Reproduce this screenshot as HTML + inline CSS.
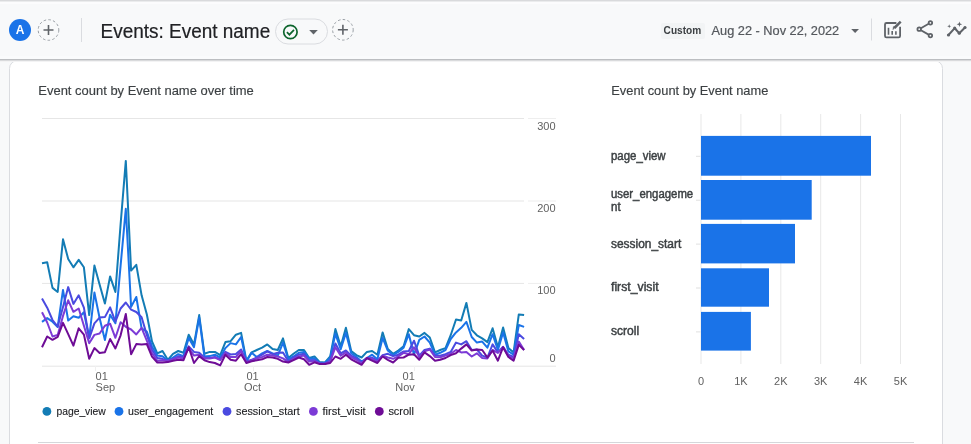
<!DOCTYPE html>
<html lang="en"><head><meta charset="utf-8"><title>Events: Event name</title>
<style>
html,body{margin:0;padding:0;background:#f8f9fa;}
body{width:971px;height:444px;overflow:hidden;position:relative;font-family:'Liberation Sans',sans-serif;}
svg{position:absolute;left:0;top:0;display:block;will-change:transform;}
text{font-family:'Liberation Sans',sans-serif;}
</style></head><body>
<svg width="971" height="444" viewBox="0 0 971 444">

<rect x="0" y="0" width="971" height="444" fill="#f8f9fa"/>
<rect x="0" y="0" width="971" height="1" fill="#d9dadc"/><rect x="0" y="1" width="971" height="1" fill="#ebeced"/><rect x="0" y="2" width="971" height="2" fill="#fcfcfd"/>
<rect x="9.5" y="60.5" width="933" height="400" rx="8" ry="8" fill="#ffffff" stroke="#dadce0" stroke-width="1"/>
<rect x="0" y="56" width="971" height="3" fill="#fafbfc"/>
<rect x="0" y="61" width="971" height="1" fill="#f3f3f4"/>
<rect x="0" y="60" width="971" height="1" fill="#d9dadc"/>
<rect x="0" y="59" width="971" height="1" fill="#bcbec1"/>
<circle cx="20" cy="30" r="11" fill="#1a73e8"/>
<text x="20" y="34.3" font-size="12" font-weight="700" fill="#ffffff" text-anchor="middle">A</text>
<circle cx="48.5" cy="30" r="10.3" fill="none" stroke="#9aa0a6" stroke-width="1" stroke-dasharray="2.6 2.2"/>
<path d="M43.5 30h10M48.5 25v10" stroke="#5f6368" stroke-width="1.6" fill="none"/>
<rect x="81" y="18" width="1" height="24" fill="#dadce0"/>
<text x="100.5" y="38" font-size="20" fill="#202124" stroke="#202124" stroke-width="0.2" textLength="169.7" lengthAdjust="spacingAndGlyphs">Events: Event name</text>
<rect x="275.5" y="19" width="52" height="25" rx="12.5" fill="#f8f9fa" stroke="#dadce0" stroke-width="1"/>
<circle cx="290.4" cy="32" r="6.7" fill="none" stroke="#0d652d" stroke-width="1.7"/>
<path d="M286.9 32.2l2.5 2.5l4.6 -4.9" fill="none" stroke="#0d652d" stroke-width="1.7"/>
<path d="M309.2 30l4.3 4.4l4.3 -4.4z" fill="#5f6368"/>
<circle cx="342.9" cy="29.8" r="10.3" fill="none" stroke="#9aa0a6" stroke-width="1" stroke-dasharray="2.6 2.2"/>
<path d="M337.9 29.8h10M342.9 24.8v10" stroke="#5f6368" stroke-width="1.6" fill="none"/>
<rect x="661" y="23" width="44" height="16" rx="2" fill="#f2f4f5"/>
<text x="663.6" y="34.1" font-size="10" font-weight="700" fill="#3c4043" textLength="37.6" lengthAdjust="spacingAndGlyphs">Custom</text>
<text x="711.6" y="34.7" font-size="12.3" fill="#54585d" stroke="#54585d" stroke-width="0.2" textLength="127.6" lengthAdjust="spacingAndGlyphs">Aug 22 - Nov 22, 2022</text>
<path d="M851.2 29l3.9 4l3.9 -4z" fill="#5f6368"/>
<rect x="871" y="18.5" width="1" height="22" fill="#dadce0"/>
<g fill="none" stroke="#5f6368" stroke-width="1.8"><path d="M896.4 23h-9.9a1.5 1.5 0 0 0 -1.5 1.5v11.4a1.5 1.5 0 0 0 1.5 1.5h12.1a1.5 1.5 0 0 0 1.5 -1.5v-9.2"/><path d="M888.5 34.8V27.8M892.2 34.8V31M895.9 34.8V31.2" stroke-width="1.6"/><path d="M900.7 21.7l-6.3 6.3" stroke-width="2.5"/><path d="M895.4 27l-2.4 2.6l0.4 -2.9z" fill="#5f6368" stroke-width="0.6"/></g>
<g fill="none" stroke="#5f6368" stroke-width="1.8"><path d="M930.4 22.8l-11.2 6.4l11.2 6.4"/><circle cx="930.4" cy="22.8" r="1.75" fill="#f8f9fa"/><circle cx="919.2" cy="29.2" r="1.75" fill="#f8f9fa"/><circle cx="930.4" cy="35.6" r="1.75" fill="#f8f9fa"/></g>
<path d="M948.5 35l6.2 -6.8l4.6 5l5.7 -5.7" fill="none" stroke="#5f6368" stroke-width="2" stroke-linejoin="round" stroke-linecap="round"/><circle cx="948.5" cy="35" r="1.6" fill="#5f6368"/><circle cx="954.7" cy="28.2" r="1.6" fill="#5f6368"/><circle cx="959.3" cy="33.2" r="1.6" fill="#5f6368"/><circle cx="965" cy="27.5" r="1.6" fill="#5f6368"/><path d="M959.4 21.5l.7 2.1l2.1 .7l-2.1 .7l-.7 2.1l-.7 -2.1l-2.1 -.7l2.1 -.7z" fill="#5f6368"/><path d="M949.2 24.3l.5 1.5l1.5 .5l-1.5 .5l-.5 1.5l-.5 -1.5l-1.5 -.5l1.5 -.5z" fill="#5f6368"/>
<text x="38.3" y="95.3" font-size="13" fill="#3c4043" stroke="#3c4043" stroke-width="0.15" textLength="215.5" lengthAdjust="spacingAndGlyphs">Event count by Event name over time</text>
<text x="611.3" y="95.3" font-size="13" fill="#3c4043" stroke="#3c4043" stroke-width="0.15" textLength="157" lengthAdjust="spacingAndGlyphs">Event count by Event name</text>
<rect x="42" y="118.0" width="482" height="1" fill="#e6e6e6"/>
<rect x="528" y="118.0" width="28" height="1" fill="#eeeeee"/>
<rect x="42" y="200.5" width="482" height="1" fill="#e6e6e6"/>
<rect x="528" y="200.5" width="28" height="1" fill="#eeeeee"/>
<rect x="42" y="282.9" width="482" height="1" fill="#e6e6e6"/>
<rect x="528" y="282.9" width="28" height="1" fill="#eeeeee"/>
<rect x="42" y="365.7" width="514" height="1" fill="#e5e5e5"/>
<rect x="95.0" y="366" width="1" height="5" fill="#f0f0f0"/>
<rect x="253.0" y="366" width="1" height="5" fill="#f0f0f0"/>
<rect x="414.0" y="366" width="1" height="5" fill="#f0f0f0"/>
<text x="555.6" y="129.9" font-size="11" fill="#616161" text-anchor="end">300</text>
<text x="555.6" y="212.0" font-size="11" fill="#616161" text-anchor="end">200</text>
<text x="555.6" y="293.8" font-size="11" fill="#616161" text-anchor="end">100</text>
<text x="555.6" y="361.6" font-size="11" fill="#616161" text-anchor="end">0</text>
<text x="95.6" y="379.8" font-size="11" fill="#616161">01</text><text x="95.6" y="390.7" font-size="11" fill="#616161">Sep</text>
<text x="252.6" y="379.8" font-size="11" fill="#616161" text-anchor="middle">01</text><text x="252.6" y="390.7" font-size="11" fill="#616161" text-anchor="middle">Oct</text>
<text x="414.8" y="379.8" font-size="11" fill="#616161" text-anchor="end">01</text><text x="414.8" y="390.7" font-size="11" fill="#616161" text-anchor="end">Nov</text>
<polyline fill="none" stroke="#137cb5" stroke-width="2" stroke-linejoin="round" points="42.0,263.2 47.2,262.3 52.5,287.9 57.7,292.0 63.0,239.3 68.2,259.0 73.4,267.3 78.7,259.9 83.9,267.3 89.2,315.1 94.4,265.6 99.6,284.6 104.9,303.6 110.1,276.4 115.4,292.0 120.6,224.4 125.8,160.9 131.1,270.6 136.3,264.8 141.6,295.3 146.8,314.3 152.0,341.5 157.3,353.3 162.5,351.0 167.8,359.8 173.0,353.8 178.2,351.0 183.5,352.8 188.7,334.7 194.0,344.4 199.2,315.1 204.4,353.8 209.7,351.9 214.9,351.9 220.2,355.1 225.4,342.1 230.6,341.2 235.9,334.7 241.1,332.9 246.4,360.7 251.6,352.4 256.8,350.0 262.1,347.7 267.3,344.4 272.6,349.1 277.8,350.0 283.0,338.4 288.3,358.0 293.5,353.8 298.8,350.0 304.0,350.0 309.2,358.0 314.5,356.5 319.7,362.1 325.0,362.5 330.2,356.5 335.4,329.1 340.7,346.4 345.9,327.8 351.2,351.0 356.4,355.1 361.6,357.5 366.9,351.9 372.1,351.0 377.4,354.7 382.6,332.4 387.8,349.1 393.1,353.8 398.3,350.5 403.6,346.4 408.8,329.1 414.0,335.2 419.3,336.5 424.5,332.9 429.8,337.5 435.0,352.4 440.2,350.0 445.5,348.1 450.7,335.2 456.0,319.5 461.2,320.5 466.4,302.9 471.7,329.9 476.9,335.3 482.2,338.4 487.4,342.1 492.6,328.3 497.9,347.2 503.1,327.5 508.4,348.1 513.6,352.4 518.8,314.4 524.1,315.1"/>
<polyline fill="none" stroke="#1a73e8" stroke-width="2" stroke-linejoin="round" points="42.0,321.9 47.2,318.1 52.5,321.7 57.7,327.0 63.0,289.9 68.2,320.5 73.4,316.2 78.7,317.8 83.9,312.2 89.2,338.2 94.4,292.5 99.6,318.0 104.9,340.0 110.1,314.7 115.4,323.3 120.6,265.6 125.8,208.8 131.1,306.9 136.3,297.0 141.6,328.3 146.8,331.6 152.0,346.4 157.3,355.5 162.5,356.3 167.8,360.7 173.0,357.5 178.2,354.2 183.5,356.1 188.7,337.9 194.0,347.2 199.2,317.6 204.4,356.5 209.7,356.1 214.9,354.7 220.2,357.5 225.4,348.1 230.6,343.1 235.9,344.4 241.1,337.0 246.4,361.6 251.6,352.8 256.8,357.0 262.1,353.3 267.3,351.0 272.6,353.3 277.8,355.6 283.0,342.6 288.3,359.3 293.5,356.5 298.8,352.8 304.0,351.9 309.2,358.8 314.5,358.4 319.7,363.0 325.0,363.0 330.2,358.0 335.4,333.8 340.7,349.1 345.9,332.9 351.2,353.3 356.4,357.0 361.6,361.6 366.9,358.0 372.1,354.7 377.4,359.3 382.6,337.9 387.8,350.5 393.1,355.1 398.3,351.9 403.6,347.7 408.8,334.2 414.0,354.7 419.3,339.8 424.5,336.5 429.8,342.6 435.0,354.7 440.2,352.8 445.5,350.0 450.7,339.0 456.0,332.4 461.2,327.8 466.4,321.9 471.7,337.0 476.9,342.6 482.2,341.6 487.4,347.7 492.6,334.2 497.9,350.0 503.1,332.4 508.4,351.4 513.6,354.7 518.8,325.0 524.1,326.9"/>
<polyline fill="none" stroke="#4a4ae0" stroke-width="2" stroke-linejoin="round" points="42.0,298.6 47.2,307.7 52.5,320.0 57.7,326.6 63.0,306.9 68.2,287.1 73.4,303.9 78.7,295.3 83.9,307.7 89.2,338.3 94.4,323.3 99.6,317.6 104.9,317.1 110.1,307.4 115.4,321.7 120.6,308.5 125.8,302.5 131.1,309.6 136.3,312.0 141.6,317.2 146.8,334.9 152.0,349.7 157.3,358.0 162.5,358.8 167.8,361.3 173.0,358.8 178.2,356.3 183.5,357.1 188.7,346.4 194.0,351.9 199.2,352.8 204.4,357.5 209.7,358.0 214.9,357.0 220.2,359.3 225.4,351.9 230.6,354.4 235.9,354.0 241.1,349.5 246.4,361.6 251.6,359.8 256.8,357.5 262.1,354.7 267.3,351.4 272.6,354.2 277.8,352.8 283.0,352.4 288.3,361.3 293.5,357.5 298.8,354.7 304.0,353.8 309.2,360.2 314.5,360.2 319.7,363.4 325.0,363.4 330.2,360.7 335.4,343.5 340.7,353.3 345.9,350.5 351.2,355.6 356.4,358.4 361.6,362.5 366.9,358.4 372.1,357.5 377.4,360.7 382.6,355.1 387.8,353.8 393.1,356.1 398.3,354.7 403.6,351.4 408.8,351.0 414.0,340.7 419.3,355.6 424.5,350.0 429.8,348.6 435.0,355.6 440.2,355.8 445.5,354.2 450.7,351.9 456.0,342.6 461.2,344.4 466.4,341.2 471.7,350.0 476.9,349.5 482.2,355.6 487.4,357.5 492.6,344.4 497.9,352.4 503.1,346.7 508.4,354.7 513.6,357.0 518.8,334.2 524.1,339.0"/>
<polyline fill="none" stroke="#7c3bd6" stroke-width="2" stroke-linejoin="round" points="42.0,312.2 47.2,322.5 52.5,336.5 57.7,334.9 63.0,315.9 68.2,300.3 73.4,311.8 78.7,308.5 83.9,325.8 89.2,343.3 94.4,334.9 99.6,333.5 104.9,325.8 110.1,323.7 115.4,337.8 120.6,322.2 125.8,326.8 131.1,329.5 136.3,334.4 141.6,327.9 146.8,340.6 152.0,353.0 157.3,360.7 162.5,360.2 167.8,360.7 173.0,359.3 178.2,357.5 183.5,358.4 188.7,348.1 194.0,355.6 199.2,354.7 204.4,358.4 209.7,358.4 214.9,357.5 220.2,360.2 225.4,352.8 230.6,357.0 235.9,357.0 241.1,351.0 246.4,362.1 251.6,360.2 256.8,358.4 262.1,357.0 267.3,354.7 272.6,355.6 277.8,356.5 283.0,358.4 288.3,362.1 293.5,358.8 298.8,356.5 304.0,355.6 309.2,361.6 314.5,361.3 319.7,363.4 325.0,363.7 330.2,361.6 335.4,347.2 340.7,355.6 345.9,352.4 351.2,357.0 356.4,359.8 361.6,363.4 366.9,357.8 372.1,358.8 377.4,361.6 382.6,355.6 387.8,357.5 393.1,358.8 398.3,356.3 403.6,352.8 408.8,354.2 414.0,347.2 419.3,357.0 424.5,351.4 429.8,349.5 435.0,357.0 440.2,357.2 445.5,355.6 450.7,353.8 456.0,350.0 461.2,352.4 466.4,351.9 471.7,356.5 476.9,353.3 482.2,358.0 487.4,358.4 492.6,350.0 497.9,352.8 503.1,347.2 508.4,356.1 513.6,358.4 518.8,341.6 524.1,350.0"/>
<polyline fill="none" stroke="#6e0c96" stroke-width="2" stroke-linejoin="round" points="42.0,347.2 47.2,336.5 52.5,339.8 57.7,336.9 63.0,322.9 68.2,334.1 73.4,345.6 78.7,328.3 83.9,334.6 89.2,358.8 94.4,348.1 99.6,353.0 104.9,352.2 110.1,339.0 115.4,348.5 120.6,335.3 125.8,313.9 131.1,354.2 136.3,344.1 141.6,344.5 146.8,344.1 152.0,356.7 157.3,362.5 162.5,362.5 167.8,362.1 173.0,360.7 178.2,359.8 183.5,360.2 188.7,347.2 194.0,363.0 199.2,356.1 204.4,360.2 209.7,362.1 214.9,363.0 220.2,365.4 225.4,354.7 230.6,359.8 235.9,360.7 241.1,354.2 246.4,363.0 251.6,361.3 256.8,360.2 262.1,359.3 267.3,357.0 272.6,357.5 277.8,358.8 283.0,361.6 288.3,362.5 293.5,360.2 298.8,357.5 304.0,359.3 309.2,364.8 314.5,362.3 319.7,364.1 325.0,363.9 330.2,363.0 335.4,356.5 340.7,358.8 345.9,354.7 351.2,359.3 356.4,362.1 361.6,364.8 366.9,358.0 372.1,360.7 377.4,363.0 382.6,356.5 387.8,359.8 393.1,362.5 398.3,357.7 403.6,357.5 408.8,354.7 414.0,354.2 419.3,359.8 424.5,352.4 429.8,356.1 435.0,360.7 440.2,359.8 445.5,358.0 450.7,355.1 456.0,353.3 461.2,348.6 466.4,344.4 471.7,350.5 476.9,349.5 482.2,350.0 487.4,357.5 492.6,350.5 497.9,360.7 503.1,347.2 508.4,357.0 513.6,360.7 518.8,344.9 524.1,350.0"/>
<circle cx="46.9" cy="411.4" r="4.4" fill="#137cb5"/>
<text x="56.4" y="415.2" font-size="11.5" fill="#202124" stroke="#202124" stroke-width="0.12" textLength="49.4" lengthAdjust="spacingAndGlyphs">page_view</text>
<circle cx="119.0" cy="411.4" r="4.4" fill="#1a73e8"/>
<text x="128.0" y="415.2" font-size="11.5" fill="#202124" stroke="#202124" stroke-width="0.12" textLength="85.3" lengthAdjust="spacingAndGlyphs">user_engagement</text>
<circle cx="227.0" cy="411.4" r="4.4" fill="#4a4ae0"/>
<text x="236.0" y="415.2" font-size="11.5" fill="#202124" stroke="#202124" stroke-width="0.12" textLength="63.8" lengthAdjust="spacingAndGlyphs">session_start</text>
<circle cx="313.4" cy="411.4" r="4.4" fill="#7c3bd6"/>
<text x="322.5" y="415.2" font-size="11.5" fill="#202124" stroke="#202124" stroke-width="0.12" textLength="43.2" lengthAdjust="spacingAndGlyphs">first_visit</text>
<circle cx="379.3" cy="411.4" r="4.4" fill="#6e0c96"/>
<text x="388.4" y="415.2" font-size="11.5" fill="#202124" stroke="#202124" stroke-width="0.12" textLength="25.6" lengthAdjust="spacingAndGlyphs">scroll</text>
<rect x="38" y="442" width="876" height="1" fill="#d5d7da"/>
<rect x="700.5" y="114" width="1" height="250" fill="#e8e8e8"/>
<rect x="740.4" y="114" width="1" height="250" fill="#e8e8e8"/>
<rect x="780.3" y="114" width="1" height="250" fill="#e8e8e8"/>
<rect x="820.2" y="114" width="1" height="250" fill="#e8e8e8"/>
<rect x="860.1" y="114" width="1" height="250" fill="#e8e8e8"/>
<rect x="900.0" y="114" width="1" height="250" fill="#e8e8e8"/>
<rect x="696" y="155.8" width="4.5" height="1" fill="#e0e0e0"/>
<rect x="701" y="135.9" width="170.0" height="39.8" fill="#1a73e8"/>
<text x="611" y="159.7" font-size="12" fill="#3c4043" stroke="#3c4043" stroke-width="0.45" textLength="54.6" lengthAdjust="spacingAndGlyphs">page_view</text>
<rect x="696" y="199.7" width="4.5" height="1" fill="#e0e0e0"/>
<rect x="701" y="180.0" width="110.7" height="39.7" fill="#1a73e8"/>
<text x="611" y="197.7" font-size="12" fill="#3c4043" stroke="#3c4043" stroke-width="0.45" textLength="82.2" lengthAdjust="spacingAndGlyphs">user_engageme</text>
<text x="611" y="210.6" font-size="12" fill="#3c4043" stroke="#3c4043" stroke-width="0.45" textLength="9.6" lengthAdjust="spacingAndGlyphs">nt</text>
<rect x="696" y="243.6" width="4.5" height="1" fill="#e0e0e0"/>
<rect x="701" y="223.9" width="94.0" height="39.5" fill="#1a73e8"/>
<text x="611" y="247.5" font-size="12" fill="#3c4043" stroke="#3c4043" stroke-width="0.45" textLength="70.2" lengthAdjust="spacingAndGlyphs">session_start</text>
<rect x="696" y="287.5" width="4.5" height="1" fill="#e0e0e0"/>
<rect x="701" y="268.3" width="68.0" height="38.4" fill="#1a73e8"/>
<text x="611" y="291.4" font-size="12" fill="#3c4043" stroke="#3c4043" stroke-width="0.45" textLength="47.6" lengthAdjust="spacingAndGlyphs">first_visit</text>
<rect x="696" y="331.4" width="4.5" height="1" fill="#e0e0e0"/>
<rect x="701" y="311.9" width="49.9" height="38.7" fill="#1a73e8"/>
<text x="611" y="335.3" font-size="12" fill="#3c4043" stroke="#3c4043" stroke-width="0.45" textLength="28.2" lengthAdjust="spacingAndGlyphs">scroll</text>
<text x="701.0" y="385.4" font-size="11" fill="#616161" text-anchor="middle">0</text>
<text x="740.9" y="385.4" font-size="11" fill="#616161" text-anchor="middle">1K</text>
<text x="780.8" y="385.4" font-size="11" fill="#616161" text-anchor="middle">2K</text>
<text x="820.7" y="385.4" font-size="11" fill="#616161" text-anchor="middle">3K</text>
<text x="860.6" y="385.4" font-size="11" fill="#616161" text-anchor="middle">4K</text>
<text x="900.5" y="385.4" font-size="11" fill="#616161" text-anchor="middle">5K</text>
</svg>
</body></html>
